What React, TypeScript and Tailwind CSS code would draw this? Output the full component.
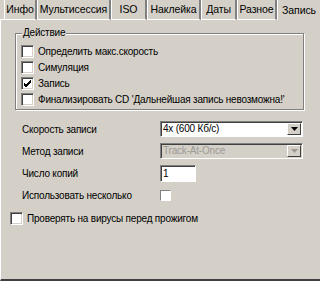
import React from "react";

const tabs = [
  { label: "Инфо", w: "w-[33px]" },
  { label: "Мультисессия", w: "w-[74px]" },
  { label: "ISO", w: "w-[36px]" },
  { label: "Наклейка", w: "w-[54px]" },
  { label: "Даты", w: "w-[36px]" },
  { label: "Разное", w: "w-[40px]" },
];

function Check({ checked = false }: { checked?: boolean }) {
  return (
    <div className="w-[13px] h-[13px] shrink-0 bg-white border-t border-l border-[#808080] border-r border-b border-r-white border-b-white shadow-[inset_1px_1px_0_#404040,inset_-1px_-1px_0_#d4d0c8] flex items-center justify-center">
      {checked && (
        <svg width="9" height="9" viewBox="0 0 9 9">
          <path d="M1 4 L3 6 L8 1 M1 5 L3 7 L8 2 M1 6 L3 8 L8 3" stroke="#000" strokeWidth="1" fill="none" />
        </svg>
      )}
    </div>
  );
}

function Arrow({ color }: { color: string }) {
  return (
    <svg width="7" height="4" viewBox="0 0 7 4">
      <path d="M0 0 H7 L3.5 4 Z" fill={color} />
    </svg>
  );
}

function Combo({ value, disabled = false }: { value: string; disabled?: boolean }) {
  return (
    <div
      className={`w-[143px] h-[16px] flex items-center border-t border-l border-[#808080] border-r border-b border-r-white border-b-white shadow-[inset_1px_1px_0_#404040] ${
        disabled ? "bg-[#d4d0c8] text-[#9c9a94]" : "bg-white text-black"
      }`}
    >
      <span className="flex-1 pl-[2px] leading-none">{value}</span>
      <div className="w-[14px] h-[12px] mr-[1px] bg-[#d4d0c8] border-t border-l border-white border-r border-b border-r-[#404040] border-b-[#404040] flex items-center justify-center">
        <Arrow color={disabled ? "#9c9a94" : "#000"} />
      </div>
    </div>
  );
}

export default function App() {
  return (
    <div className="w-[320px] h-[281px] bg-[#d4d0c8] overflow-hidden flex flex-col font-['Liberation_Sans',Arial,sans-serif] text-[10px] tracking-[-0.2px] text-black">
      {/* tabs */}
      <div className="flex h-[20px] shrink-0 text-[10.5px] tracking-[-0.1px]">
        <div className="w-[4px] border-b border-white" />
        {tabs.map((t) => (
          <div
            key={t.label}
            className={`${t.w} flex items-center justify-center border-b border-white border-r-2 border-r-[#808080] border-l border-l-white whitespace-nowrap pt-[1px]`}
          >
            {t.label}
          </div>
        ))}
        <div className="flex-1 flex items-center justify-center border-l border-white whitespace-nowrap pt-[1px]">
          Запись
        </div>
      </div>

      {/* panel */}
      <div className="flex-1 flex flex-col border-l border-white border-b-2 border-b-[#404040] pl-[14px] pr-[16px]">
        {/* group */}
        <div className="relative mt-[13px] h-[77px] border border-[#808080] shadow-[1px_1px_0_#fff,inset_1px_1px_0_#fff] flex flex-col gap-[3px] pl-[5px] pt-[11px]">
          <span className="absolute -top-[6px] left-[6px] px-[1px] bg-[#d4d0c8] leading-none">Действие</span>
          {[
            ["Определить макс.скорость", false],
            ["Симуляция", false],
            ["Запись", true],
            ["Финализировать CD 'Дальнейшая запись невозможна!'", false],
          ].map(([label, c]) => (
            <div key={label as string} className="flex items-center gap-[4px] h-[13px] whitespace-nowrap">
              <Check checked={c as boolean} />
              <span>{label as string}</span>
            </div>
          ))}
        </div>

        {/* fields */}
        <div className="mt-[11px] grid grid-cols-[138px_143px] gap-y-[6px] items-center pl-[7px]">
          <span>Скорость записи</span>
          <Combo value="4x (600 Кб/с)" />
          <span>Метод записи</span>
          <Combo value="Track-At-Once" disabled />
          <span>Число копий</span>
          <div className="w-[36px] h-[17px] bg-white border-t border-l border-[#808080] border-r border-b border-r-white border-b-white shadow-[inset_1px_1px_0_#404040] flex items-center pl-[2px]">
            1
          </div>
          <span className="whitespace-nowrap">Использовать несколько</span>
          <div className="w-[11px] h-[11px] bg-white border-t border-l border-[#808080] border-r border-b border-r-white border-b-white" />
        </div>

        <div className="mt-[8px] -ml-[5px] flex items-center gap-[4px] whitespace-nowrap">
          <Check />
          <span>Проверять на вирусы перед прожигом</span>
        </div>
      </div>
    </div>
  );
}
